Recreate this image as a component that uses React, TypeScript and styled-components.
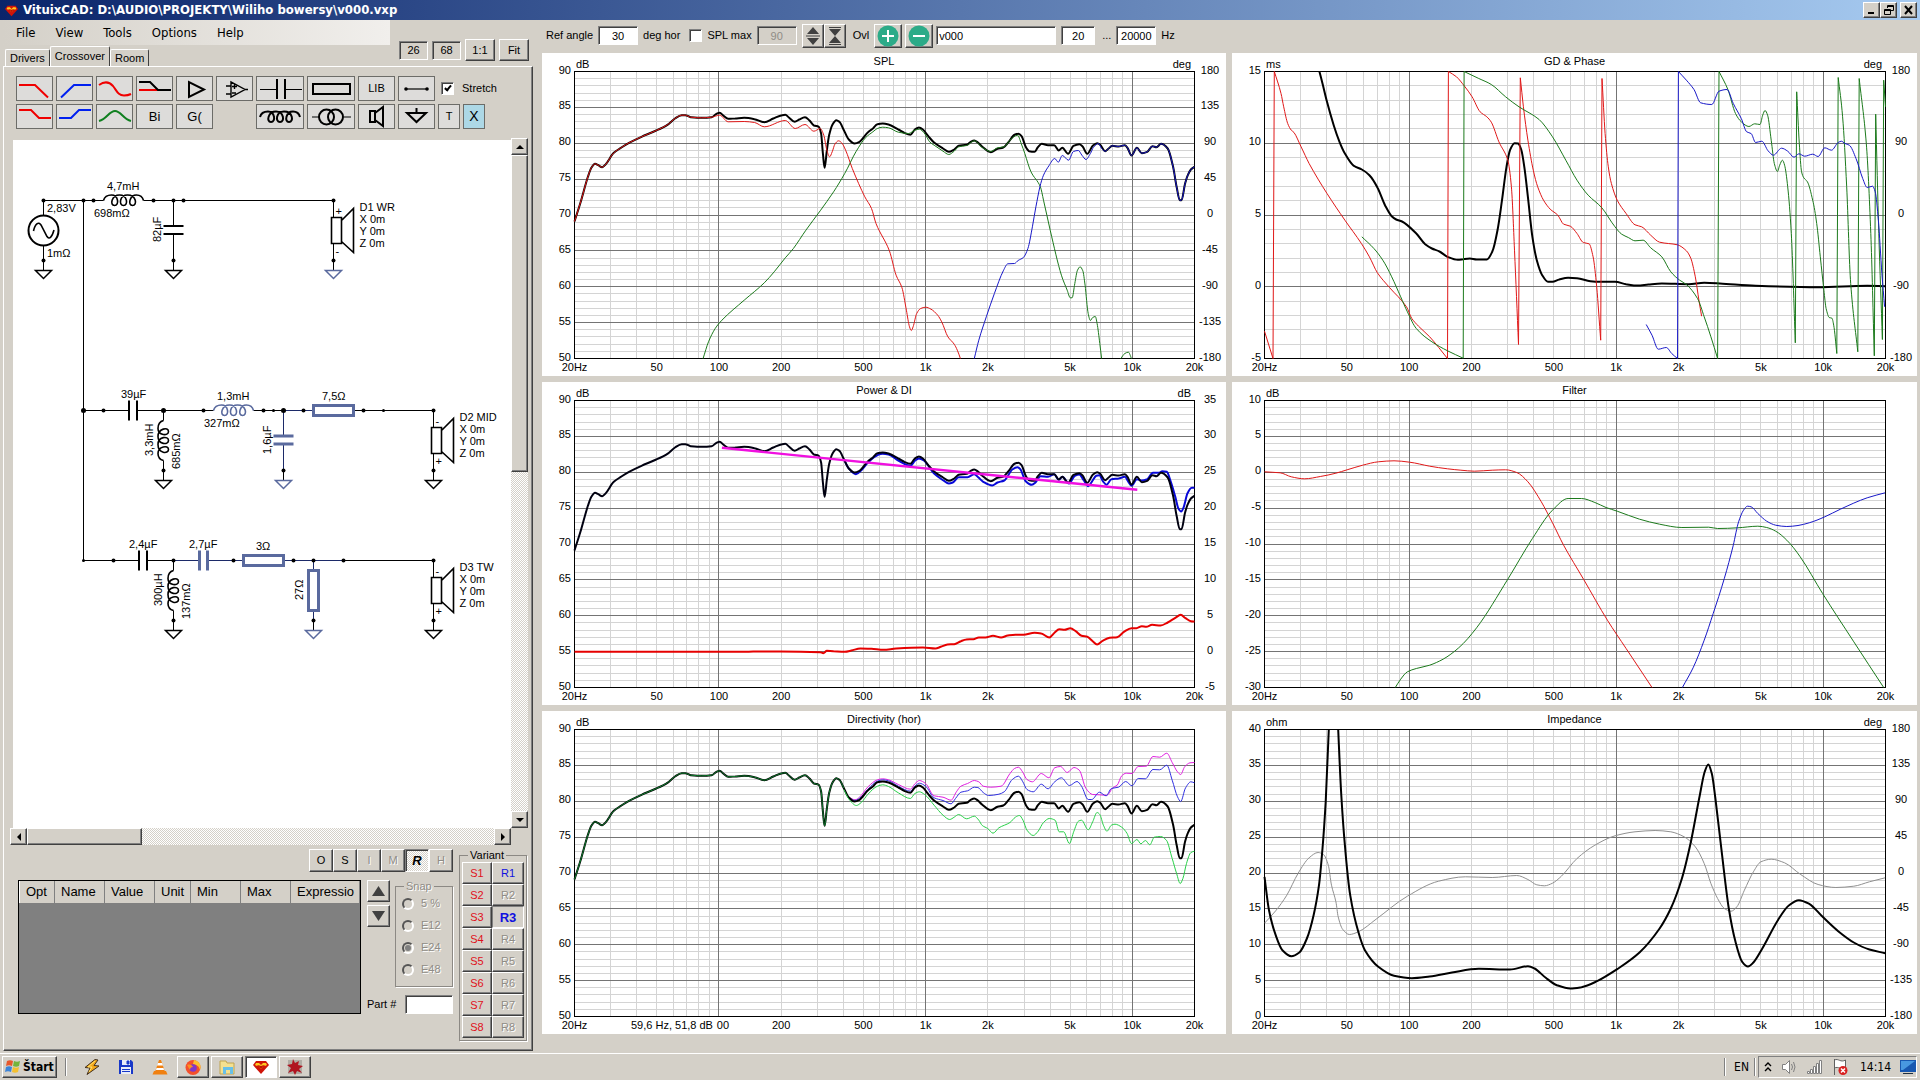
import React, { useLayoutEffect, useRef, useState } from 'react';
import styled, { createGlobalStyle, css } from 'styled-components';

const face = '#d4d0c8';
const uiFont = '"Liberation Sans", Arial, sans-serif';
const menuFont = '"DejaVu Sans Condensed", "DejaVu Sans", Tahoma, sans-serif';
const partBlue = '#5a6a9e';

const GlobalStyle = createGlobalStyle`
  *, *::before, *::after { box-sizing: border-box; }
  body { margin: 0; background: ${face}; font: 11px/13px ${uiFont}; color: #000; }
  button, input { font: inherit; color: inherit; margin: 0; border-radius: 0; }
`;

const raised = css`
  border: 1px solid;
  border-color: #fff #404040 #404040 #fff;
  box-shadow: inset -1px -1px 0 #808080;
`;
const sunken = css`
  border: 1px solid;
  border-color: #808080 #fff #fff #808080;
  box-shadow: inset 1px 1px 0 #404040;
`;
const dither = css`
  background: repeating-conic-gradient(#ffffff 0 25%, ${face} 0 50%) 0 0 / 2px 2px;
`;

/* ---------- window frame ---------- */

const Desktop = styled.div`
  display: flex;
  flex-direction: column;
  min-width: 1280px;
  min-height: 100vh;
`;
const TitleBar = styled.header`
  display: flex;
  align-items: center;
  height: 20px;
  padding: 0 3px 0 5px;
  gap: 5px;
  background: linear-gradient(90deg, #0a246a, #a6caf0);
  color: #fff;
`;
const Title = styled.h1`
  flex: 1;
  margin: 0;
  font: bold 13px/20px ${menuFont};
`;
const WindowButtons = styled.div`
  display: flex;
`;
const WindowButton = styled.button<{ $apart?: boolean }>`
  ${raised}
  width: 17px;
  height: 16px;
  padding: 0;
  margin-left: ${(p) => (p.$apart ? '3px' : '0')};
  background: ${face};
  display: grid;
  place-items: center;
`;
const Main = styled.main`
  flex: 1;
  display: flex;
`;

/* ---------- left pane ---------- */

const LeftPane = styled.section`
  width: 536px;
  flex: none;
  display: flex;
  flex-direction: column;
  padding: 0 3px 2px;
`;
const PaneHead = styled.div`
  display: flex;
  justify-content: space-between;
  height: 46px;
`;
const MenuAndTabs = styled.div`
  display: flex;
  flex-direction: column;
  justify-content: space-between;
`;
const MenuBar = styled.nav`
  display: flex;
  align-items: center;
  width: 387px;
  height: 25px;
  padding-left: 13px;
  gap: 20px;
  background: linear-gradient(90deg, ${face}, #f1efec);
`;
const MenuItem = styled.button`
  border: 0;
  padding: 0;
  background: none;
  font: 13px/16px ${menuFont};
`;
const Tabs = styled.div`
  display: flex;
  align-items: flex-end;
  padding-left: 2px;
`;
const Tab = styled.button<{ $active?: boolean }>`
  height: ${(p) => (p.$active ? 20 : 17)}px;
  padding: 0 4px;
  border: 1px solid;
  border-color: #fff #404040 transparent #fff;
  border-bottom: 0;
  border-radius: 2px 2px 0 0;
  background: ${face};
`;
const ViewTools = styled.div`
  display: flex;
  align-items: center;
  gap: 4px;
  height: 22px;
  margin: 19px 4px 0 0;
`;
const SizeBox = styled.output`
  ${sunken}
  width: 29px;
  height: 19px;
  line-height: 17px;
  text-align: center;
`;
const SmallButton = styled.button`
  ${raised}
  width: 30px;
  height: 22px;
  padding: 0;
  background: ${face};
`;
const TabPage = styled.div`
  flex: 1;
  display: flex;
  flex-direction: column;
  border: 1px solid;
  border-color: #fff #404040 #404040 #fff;
  box-shadow: inset -1px -1px 0 #808080;
`;
const ToolRows = styled.div`
  display: flex;
  flex-direction: column;
  gap: 3px;
  padding: 9px 0 0 12px;
`;
const ToolRow = styled.div`
  display: flex;
  align-items: center;
  gap: 3px;
`;
const Tool = styled.button<{ $w?: number; $tint?: string; $text?: number }>`
  width: ${(p) => p.$w ?? 37}px;
  height: 25px;
  padding: 0;
  border: 1px solid #6c6c68;
  background: ${(p) => p.$tint ?? '#dddcda'};
  font-size: ${(p) => p.$text ?? 11}px;
  svg { display: block; fill: none; }
`;
const ToolSpace = styled.span`
  width: 37px;
`;
const CheckLabel = styled.label`
  display: flex;
  align-items: center;
  gap: 8px;
  margin-left: 3px;
`;
const Check = styled.input<{ $before?: number }>`
  appearance: none;
  ${sunken}
  width: 13px;
  height: 13px;
  && { margin-left: ${(p) => p.$before ?? 0}px; }
  background: #fff;
  &:checked::after {
    content: '';
    display: block;
    width: 4px;
    height: 7px;
    margin: 1px 0 0 4px;
    border: solid #000;
    border-width: 0 2px 2px 0;
    transform: rotate(40deg);
  }
`;
const Viewport = styled.div`
  flex: 1;
  display: grid;
  grid-template: 1fr 17px / 1fr 17px;
  margin: 9px 4px 0 6px;
`;
const Sheet = styled.div`
  margin: 2px 0 0 3px;
  background: #fff;
  overflow: hidden;
  svg { display: block; }
`;
const Scroll = styled.div<{ $across?: boolean }>`
  ${dither}
  display: flex;
  flex-direction: ${(p) => (p.$across ? 'row' : 'column')};
`;
const ScrollArrow = styled.button`
  ${raised}
  width: 17px;
  height: 17px;
  padding: 0;
  background: ${face};
  display: grid;
  place-items: center;
`;
const Thumb = styled.div<{ $share: string }>`
  ${raised}
  flex: 0 0 ${(p) => p.$share};
  background: ${face};
`;
const Track = styled.div`
  flex: 1;
`;
const Lower = styled.div`
  display: flex;
  height: 205px;
  padding: 4px 5px 0 14px;
  gap: 6px;
`;
const LowerLeft = styled.div`
  flex: 1;
  display: flex;
  flex-direction: column;
  gap: 8px;
`;
const ModeRow = styled.div`
  display: flex;
  justify-content: flex-end;
`;
const ModeButton = styled.button<{ $on?: boolean }>`
  ${raised}
  width: 24px;
  height: 23px;
  padding: 0;
  background: ${face};
  &:disabled { color: #8f8c86; text-shadow: 1px 1px 0 #fff; }
  ${(p) =>
    p.$on &&
    css`
      ${sunken}
      ${dither}
      font: italic bold 13px ${uiFont};
    `}
`;
const PartsRow = styled.div`
  display: flex;
  gap: 6px;
  height: 134px;
`;
const GridBox = styled.div`
  flex: 1;
  border: 1px solid #000;
  background: #808080;
  overflow: hidden;
`;
const PartsTable = styled.table`
  width: 100%;
  table-layout: fixed;
  border-collapse: collapse;
  th {
    height: 22px;
    padding: 0 0 0 6px;
    background: ${face};
    border-right: 1px solid #808080;
    border-left: 1px solid #fff;
    font: 13px/20px ${uiFont};
    text-align: left;
    white-space: nowrap;
    overflow: hidden;
  }
`;
const PartsSide = styled.div`
  width: 86px;
  display: flex;
  flex-direction: column;
  justify-content: space-between;
`;
const SideTop = styled.div`
  display: flex;
  justify-content: space-between;
`;
const ArrowColumn = styled.div`
  display: flex;
  flex-direction: column;
  gap: 3px;
`;
const ArrowButton = styled.button`
  ${raised}
  width: 23px;
  height: 22px;
  padding: 0;
  background: ${face};
  display: grid;
  place-items: center;
`;
const Group = styled.fieldset<{ $w: number; $dim?: boolean }>`
  width: ${(p) => p.$w}px;
  min-width: 0;
  margin: 0;
  padding: 0 2px 2px;
  border: 1px solid #8c8984;
  box-shadow: 1px 1px 0 #fff;
  ${(p) => p.$dim && 'color: #8f8c86; text-shadow: 1px 1px 0 #fff;'}
  legend { margin-left: 6px; padding: 0 2px; line-height: 13px; }
`;
const RadioList = styled.div`
  display: flex;
  flex-direction: column;
  gap: 9px;
  padding: 4px 4px 8px;
`;
const RadioLabel = styled.label`
  display: flex;
  align-items: center;
  gap: 7px;
`;
const Radio = styled.input`
  appearance: none;
  width: 12px;
  height: 12px;
  border: 2px solid;
  border-color: #555 #fff #fff #555;
  border-radius: 50%;
  &:checked {
    background: #808080;
    background-clip: content-box;
    padding: 1px;
  }
`;
const PartLabel = styled.label`
  display: flex;
  align-items: center;
  justify-content: space-between;
`;
const Field = styled.input<{ $w: number; $left?: boolean }>`
  ${sunken}
  width: ${(p) => p.$w}px;
  height: 19px;
  padding: 0 2px;
  background: #fff;
  text-align: ${(p) => (p.$left ? 'left' : 'center')};
  &:disabled { background: ${face}; color: #8f8c86; }
`;
const VariantGrid = styled.div`
  display: grid;
  grid-template-columns: 30px 32px;
  grid-auto-rows: 22px;
`;
const VariantButton = styled.button<{ $color: string; $on?: boolean }>`
  ${raised}
  padding: 0;
  background: ${face};
  color: ${(p) => p.$color};
  &:disabled { color: #8f8c86; text-shadow: 1px 1px 0 #fff; }
  ${(p) => p.$on && css`border-color: #808080 #fff #fff #808080; box-shadow: none; font-weight: bold; font-size: 13px;`}
`;

/* ---------- right pane ---------- */

const RightPane = styled.section`
  flex: 1;
  min-width: 0;
  display: flex;
  flex-direction: column;
  padding: 0 3px 19px 6px;
`;
const RefBar = styled.div`
  display: flex;
  align-items: center;
  height: 33px;
  padding: 0 0 2px 4px;
  gap: 5px;
`;
const RefLabel = styled.label<{ $before?: number }>`
  margin-left: ${(p) => p.$before ?? 0}px;
  white-space: nowrap;
`;
const SpinPair = styled.div`
  display: flex;
`;
const Spin = styled.button`
  ${raised}
  width: 22px;
  height: 24px;
  padding: 0;
  background: ${face};
  display: grid;
  place-items: center;
`;
const Overlay = styled.div`
  display: flex;
  align-items: center;
  gap: 3px;
`;
const RoundButton = styled.button`
  ${raised}
  width: 28px;
  height: 24px;
  padding: 0;
  background: ${face};
  display: grid;
  place-items: center;
`;
const Charts = styled.div`
  flex: 1;
  display: grid;
  grid-template-columns: 684fr 685fr;
  grid-template-rows: repeat(3, 1fr);
  gap: 6px;
`;
const ChartBox = styled.figure`
  margin: 0;
  min-width: 0;
  min-height: 220px;
  background: #fff;
  overflow: hidden;
  svg { display: block; }
  text { font: 11px ${uiFont}; }
`;

/* ---------- task bar ---------- */

const TaskBar = styled.footer`
  display: flex;
  align-items: center;
  height: 27px;
  padding: 0 3px 0 2px;
  border-top: 1px solid #fff;
  font: 12px/16px ${menuFont};
`;
const StartButton = styled.button`
  ${raised}
  display: flex;
  align-items: center;
  gap: 2px;
  width: 55px;
  height: 22px;
  padding: 0 2px;
  background: ${face};
  font: bold 12px/16px ${menuFont};
`;
const Divider = styled.span<{ $tight?: boolean }>`
  width: 2px;
  height: 18px;
  margin: ${(p) => (p.$tight ? '0 2px 0 5px' : '0 8px')};
  border-left: 1px solid #808080;
  border-right: 1px solid #fff;
`;
const Launchers = styled.div`
  display: flex;
  gap: 18px;
  padding: 0 9px;
`;
const Launcher = styled.button`
  width: 16px;
  height: 16px;
  padding: 0;
  border: 0;
  background: none;
  svg { display: block; }
`;
const Tasks = styled.div`
  display: flex;
  flex: 1;
  gap: 2px;
`;
const Task = styled.button<{ $on?: boolean }>`
  ${raised}
  width: 32px;
  height: 22px;
  padding: 0;
  display: grid;
  place-items: center;
  background: ${face};
  ${(p) => p.$on && css`${sunken} background: #fff;`}
`;
const Tray = styled.div`
  display: flex;
  align-items: center;
  justify-content: space-between;
  width: 159px;
  height: 22px;
  padding: 0 0 0 5px;
  border: 1px solid;
  border-color: #808080 #fff #fff #808080;
`;

/* ---------- schematic ---------- */

const coilPath =
  'M0 0C1-4 4-5.5 8-5.5C15-5.5 16 5 11 5C6 5 8-5.5 16-5.5C24-5.5 25 5 20 5C15 5 16-5.5 24-5.5C33-5.5 34 5 29 5C24 5 26-5.5 33-5.5C37-5.5 39-4 40 0';

const Coil = ({ x, y, down, color = '#000' }: { x: number; y: number; down?: boolean; color?: string }) => (
  <path d={coilPath} transform={`translate(${x} ${y})${down ? ' rotate(90) scale(1 -1)' : ''}`} stroke={color} strokeWidth="1.6" fill="none" />
);
const Dot = ({ x, y, r = 2 }: { x: number; y: number; r?: number }) => <circle cx={x} cy={y} r={r} fill="#000" />;
const Ground = ({ x, y, color = '#000' }: { x: number; y: number; color?: string }) => (
  <g>
    <path d={`M${x} ${y}v10`} stroke="#000" />
    <Dot x={x} y={y} />
    <path d={`M${x - 8} ${y + 10}h16l-8 8z`} fill="#fff" stroke={color} strokeWidth="1.5" />
  </g>
);
const CapH = ({ x, y, color = '#000', w = 2 }: { x: number; y: number; color?: string; w?: number }) => (
  <g>
    <rect x={x - 3} y={y - 3} width="6" height="6" fill="#fff" />
    <path d={`M${x - 4} ${y - 10}v20M${x + 4} ${y - 10}v20`} stroke={color} strokeWidth={w} />
  </g>
);
const CapV = ({ x, y, color = '#000', w = 2 }: { x: number; y: number; color?: string; w?: number }) => (
  <g>
    <rect x={x - 3} y={y - 3} width="6" height="6" fill="#fff" />
    <path d={`M${x - 10} ${y - 4}h20M${x - 10} ${y + 4}h20`} stroke={color} strokeWidth={w} />
  </g>
);
const Up = ({ x, y, children }: { x: number; y: number; children: string }) => (
  <text transform={`translate(${x} ${y}) rotate(-90)`}>{children}</text>
);
const Driver = ({ x, y, name, flip, color }: { x: number; y: number; name: string; flip?: boolean; color?: string }) => (
  <g>
    <path d={`M${x} ${y}v60`} stroke="#000" />
    <Dot x={x} y={y} />
    <Ground x={x} y={y + 60} color={color} />
    <path d={`M${x - 2} ${y + 17}h10v26h-10zM${x + 8} ${y + 20}l12 -12v44l-12 -11`} fill="#fff" stroke="#000" strokeWidth="1.6" />
    <text x={x + 2} y={y + 14}>{flip ? '-' : '+'}</text>
    <text x={x + 2} y={y + 54}>{flip ? '+' : '-'}</text>
    {[name, 'X 0m', 'Y 0m', 'Z 0m'].map((t, i) => (
      <text key={t} x={x + 26} y={y + 10 + i * 12}>{t}</text>
    ))}
  </g>
);

const Schematic = () => (
  <svg width="498" height="688" viewBox="13 140 498 688" fontFamily='"Liberation Sans", Arial, sans-serif' fontSize="11">
    <g stroke="#000" fill="none">
      <path d="M43.5 260.5V200.5H103.5M143.5 200.5H333.5M83.5 200.5V560.5H173.5M173.5 200.5V260.5" />
      <path d="M83.5 410.5H213.5M253.5 410.5H433.5M163.5 410.5v10M163.5 460.5v10" />
      <path d="M343.5 560.5H433.5M173.5 560.5v10M173.5 610.5v10" />
      <path d="M173.5 560.5H343.5M313.5 560.5V620.5M283.5 410.5V470.5M283.5 410.5H313.5" stroke="#1c2a68" />
    </g>
    <circle cx="43.5" cy="230.5" r="15" fill="#fff" stroke="#000" strokeWidth="2" />
    <path d="M33.5 231C35 224 38.5 221 41 225L47 236.5C49.5 240 52 237 54 230" fill="none" stroke="#000" strokeWidth="1.6" />
    <Ground x={43.5} y={260.5} />
    <Coil x={103.5} y={200.5} />
    <CapV x={173.5} y={230} />
    <Ground x={173.5} y={260.5} />
    <CapH x={133} y={410.5} />
    <Coil x={163.5} y={420.5} down />
    <Ground x={163.5} y={470.5} />
    <Coil x={213.5} y={410.5} color={partBlue} />
    <CapV x={283.5} y={440} color={partBlue} w={3} />
    <Ground x={283.5} y={470.5} color={partBlue} />
    <rect x="313.5" y="405.5" width="40" height="10" fill="#fff" stroke={partBlue} strokeWidth="3" />
    <CapH x={143} y={560.5} />
    <CapH x={203.5} y={560.5} color={partBlue} w={3} />
    <Coil x={173.5} y={570.5} down />
    <Ground x={173.5} y={620.5} />
    <rect x="243.5" y="555.5" width="40" height="10" fill="#fff" stroke={partBlue} strokeWidth="3" />
    <rect x="308.5" y="570.5" width="10" height="40" fill="#fff" stroke={partBlue} strokeWidth="3" />
    <Ground x={313.5} y={620.5} color={partBlue} />
    {[43.5, 83.5, 93.5, 153.5, 173.5, 183.5].map((x) => <Dot key={x} x={x} y={200.5} />)}
    {[103.5, 203.5, 263.5, 303.5, 363.5].map((x) => <Dot key={x} x={x} y={410.5} />)}
    {[83.5, 163.5, 283.5].map((x) => <Dot key={x} x={x} y={410.5} r={2.5} />)}
    {[273.5, 383.5].map((x) => <Dot key={x} x={x} y={410.5} r={1.5} />)}
    {[113.5, 173.5, 233.5, 293.5, 313.5, 343.5].map((x) => <Dot key={x} x={x} y={560.5} />)}
    <Dot x={83.5} y={560.5} r={1.5} />
    <Driver x={333.5} y={200.5} name="D1 WR" color={partBlue} />
    <Driver x={433.5} y={410.5} name="D2 MID" flip />
    <Driver x={433.5} y={560.5} name="D3 TW" flip />
    <text x="47" y="212">2,83V</text>
    <text x="47" y="257">1mΩ</text>
    <text x="107" y="190">4,7mH</text>
    <text x="94" y="217">698mΩ</text>
    <Up x={161} y={242}>82µF</Up>
    <text x="121" y="398">39µF</text>
    <Up x={153} y={456}>3,3mH</Up>
    <Up x={180} y={469}>685mΩ</Up>
    <text x="217" y="400">1,3mH</text>
    <text x="204" y="427">327mΩ</text>
    <Up x={271} y={454}>1,6µF</Up>
    <text x="322" y="400">7,5Ω</text>
    <text x="129" y="548">2,4µF</text>
    <text x="189" y="548">2,7µF</text>
    <text x="256" y="550">3Ω</text>
    <Up x={162} y={606}>300µH</Up>
    <Up x={190} y={619}>137mΩ</Up>
    <Up x={303} y={600}>27Ω</Up>
  </svg>
);

/* ---------- charts ---------- */

/* Traces are sampled on a grid 861 units high; `top` is the sample value of the upper frame edge. */
type Trace = { pts: string; top: number; color: string; w?: number };
type ChartSpec = {
  title: string;
  left: string[];
  right?: string[];
  unit: string;
  rightUnit?: string;
  minor: number;
  span: number;
  traces: Trace[];
  cursor?: string;
};

const head =
  '100,664 115,600 130,530 138,502 146,491 153,495 162,501 170,492 188,458 205,442 222,428 250,410 283,391 308,374 325,355 340,345 348,345 360,351 385,353 407,351 ';
const bass =
  '418,341 425,338 433,346 444,356 460,355 480,353 503,357 525,366 545,355 565,345 572,344 580,352 593,365 603,358 616,351 626,361 636,376 647,380 652,400 656,460 660,503 665,450 670,405 677,375 686,360 693,365 703,390 ';
const treble =
  '1288,453 1295,446 1304,437 1318,439 1332,435 1338,443 1347,466 1359,443 1370,459 1382,455 1394,438 1403,441 1413,431 1428,445 1440,500 1448,560 1455,600 1459,600 1467,550 1473,525 1480,508 1488,500';
const total =
  head + bass +
  '714,418 727,430 738,425 757,396 768,385 778,372 790,370 803,373 825,388 838,398 852,404 862,388 871,382 880,388 892,408 905,427 925,445 938,455 950,448 960,437 978,434 986,426 995,421 1003,427 1013,440 1032,456 1047,446 1060,442 1072,425 1085,404 1094,401 1101,408 1110,440 1118,453 1130,455 1137,442 1146,431 1160,435 1174,435 1184,451 1192,443 1205,461 1217,437 1230,432 1237,438 1248,461 1260,437 1270,429 1277,434 ' +
  treble;

const hearing = ['90', '85', '80', '75', '70', '65', '60', '55', '50'];
const degrees = ['180', '135', '90', '45', '0', '-45', '-90', '-135', '-180'];
const red = '#e01818';
const green = '#1c7a1c';
const blue = '#1818c8';

const charts: ChartSpec[] = [
  {
    title: 'SPL', left: hearing, right: degrees, unit: 'dB', rightUnit: 'deg', minor: 40, span: 1388,
    traces: [
      { pts: total, top: 214, color: '#000', w: 2 },
      { top: 214, color: red, pts: head + '425,345 444,365 480,364 503,367 525,380 572,361 594,385 616,373 636,393 650,385 658,405 665,450 671,470 677,455 683,432 691,422 698,428 707,450 722,505 750,590 765,625 775,670 805,752 820,825 833,862 843,930 850,980 854,991 858,980 866,940 875,925 886,921 898,927 913,945 922,965 936,1010 950,1032 957,1050 964,1075' },
      { top: 214, color: green, pts: '388,1075 400,1025 415,985 430,960 480,900 525,848 547,815 572,773 590,745 618,690 650,632 680,575 705,520 730,455 752,412 768,395 778,385 790,381 803,383 825,396 848,400 862,390 872,387 885,402 895,425 905,435 925,453 938,463 950,453 960,440 978,436 995,422 1013,442 1032,454 1047,443 1062,440 1075,420 1092,405 1100,430 1108,460 1122,515 1143,560 1150,600 1165,690 1190,825 1203,870 1210,893 1214,893 1220,850 1226,810 1232,800 1238,812 1243,855 1250,940 1255,961 1260,952 1266,949 1270,970 1276,1030 1280,1075' },
      { top: 214, color: green, pts: '1323,1075 1332,1060 1340,1056 1347,1075' },
      { top: 214, color: blue, pts: '995,1075 1005,1020 1022,950 1040,880 1060,812 1070,791 1085,790 1093,781 1105,772 1115,745 1125,680 1133,620 1142,560 1150,525 1162,497 1175,475 1183,486 1192,466 1206,480 1217,454 1228,451 1236,465 1245,478 1255,460 1262,441 1273,430 1280,445 ' + treble },
    ],
  },
  {
    title: 'GD & Phase', left: ['15', '10', '5', '0', '-5'], right: ['180', '90', '0', '-90', '-180'], unit: 'ms', rightUnit: 'deg', minor: 20, span: 1391,
    traces: [
      { top: 214, color: '#000', w: 2, pts: '223,214 230,250 240,305 255,375 268,425 280,460 300,497 318,508 335,525 353,562 370,615 385,648 395,658 408,664 440,700 460,732 475,745 492,754 510,770 533,779 545,777 560,775 575,778 598,778 610,755 622,690 632,600 642,500 650,450 660,429 668,430 675,448 682,500 690,590 700,710 710,780 722,825 735,845 745,845 760,838 780,833 800,834 830,843 850,845 885,845 910,852 935,856 960,853 990,850 1050,852 1085,848 1120,850 1200,857 1340,861 1450,857 1491,858' },
      { top: 214, color: red, pts: '100,993 119,1075 122,214 137,280 143,320 152,370 160,390 166,397 182,440 200,490 240,580 280,660 317,730 335,770 353,818 380,862 418,920 430,955 445,978 470,1010 510,1075 512,214 530,230 548,258 565,290 583,335 598,350 608,366 625,425 645,480 653,560 660,750 669,1033 673,233 680,320 690,420 702,510 712,560 725,600 740,627 757,645 770,672 785,678 800,700 814,727 827,731 836,770 844,860 853,1020 856,235 863,400 870,500 877,550 890,600 910,640 930,674 945,680 965,705 985,726 1025,734 1045,752 1055,775 1065,830 1073,900 1079,948' },
      { top: 214, color: green, pts: '318,710 345,745 365,780 385,830 405,890 420,935 440,985 475,1025 510,1052 545,1074 547,214 580,235 608,253 640,290 670,320 715,358 745,410 775,480 800,540 825,585 855,622 885,680 900,702 915,712 930,722 948,720 965,743 990,770 1010,815 1030,840 1045,853 1070,895 1085,950 1100,1010 1115,1075 1118,214 1138,268 1155,340 1168,365 1185,379 1198,371 1210,373 1216,345 1221,331 1227,345 1235,420 1242,490 1249,514 1254,495 1260,480 1265,495 1272,560 1280,700 1289,1028 1292,275 1298,430 1303,515 1308,533 1316,545 1328,600 1337,670 1345,770 1353,870 1358,925 1365,952 1371,954 1375,975 1382,1060 1385,232 1395,350 1404,560 1413,850 1429,1055 1432,235 1448,430 1458,700 1466,1067 1469,342 1476,700 1484,1018 1487,240 1491,320' },
      { top: 214, color: blue, pts: '955,973 968,1005 982,1047 1000,1042 1012,1060 1025,1075 1027,214 1045,240 1062,268 1077,308 1102,313 1118,273 1136,268 1150,310 1168,355 1180,395 1190,400 1200,427 1214,423 1228,452 1240,465 1258,444 1272,453 1286,471 1297,461 1310,468 1328,462 1340,469 1355,443 1370,450 1385,427 1392,423 1400,430 1410,435 1425,475 1440,535 1450,562 1462,558 1468,575 1475,660 1483,820 1489,920' },
    ],
  },
  {
    title: 'Power & DI', left: hearing, right: ['35', '30', '25', '20', '15', '10', '5', '0', '-5'], unit: 'dB', rightUnit: 'dB', minor: 40, span: 1388,
    traces: [
      { top: 76, color: '#0808d8', w: 2, pts: '703,252 714,280 730,297 742,285 757,262 778,240 790,236 803,238 825,256 852,272 862,257 871,250 882,256 905,295 925,315 938,325 947,322 960,306 980,306 995,297 1005,308 1015,320 1035,331 1047,322 1062,316 1080,283 1092,276 1098,282 1110,318 1124,329 1132,322 1143,303 1160,305 1174,297 1184,314 1192,305 1207,325 1220,302 1230,298 1240,315 1250,333 1258,320 1268,302 1275,300 1283,318 1291,329 1302,312 1318,310 1332,305 1340,320 1347,332 1359,312 1370,316 1382,312 1395,293 1408,293 1416,288 1426,290 1435,320 1445,365 1452,400 1458,409 1464,395 1472,355 1482,338 1488,338' },
      { pts: total, top: 214, color: '#000010', w: 2 },
      { top: 76, color: '#e60000', w: 2, pts: '100,830 480,830 500,829 560,829 650,831 657,834 665,827 680,828 705,830 720,826 740,820 765,821 792,824 820,820 880,817 908,820 920,815 935,808 950,807 965,798 977,793 993,792 1005,787 1020,787 1037,782 1055,787 1070,781 1087,779 1105,779 1130,773 1145,775 1163,787 1175,772 1185,762 1197,764 1210,759 1222,768 1235,782 1248,785 1260,798 1270,808 1282,797 1298,788 1315,786 1330,770 1347,759 1358,759 1370,753 1380,755 1393,749 1412,751 1428,742 1445,728 1457,719 1468,729 1480,738 1488,739' },
      { top: 76, color: '#f010e0', w: 2.4, pts: '430,218 1360,344' },
    ],
  },
  {
    title: 'Filter', left: ['10', '5', '0', '-5', '-10', '-15', '-20', '-25', '-30'], unit: 'dB', minor: 40, span: 1391,
    traces: [
      { top: 76, color: red, pts: '100,290 135,293 160,305 190,311 225,304 260,294 285,284 320,270 355,260 390,257 425,261 470,273 510,281 540,285 570,288 610,285 640,284 665,292 690,320 720,380 745,443 770,510 815,613 868,735 910,820 968,937' },
      { top: 76, color: green, pts: '393,937 405,912 420,890 440,880 470,870 500,852 535,818 575,758 645,612 700,490 745,405 780,370 810,370 840,382 865,397 890,408 940,432 985,447 1035,457 1095,456 1115,460 1160,458 1205,453 1225,457 1245,468 1270,495 1300,545 1350,655 1420,800 1487,937' },
      { top: 76, color: blue, pts: '1036,937 1060,878 1085,795 1105,715 1130,610 1150,510 1162,440 1173,405 1182,393 1190,395 1205,415 1225,438 1245,450 1270,454 1295,451 1320,443 1355,425 1390,402 1450,368 1490,353' },
    ],
  },
  {
    title: 'Directivity (hor)', left: hearing, unit: 'dB', minor: 40, span: 1388, cursor: '59,6 Hz, 51,8 dB',
    traces: [
      { top: 73, color: '#e020e0', pts: '717,278 728,284 738,276 757,245 778,224 790,221 803,224 825,238 852,252 862,236 872,226 886,235 905,272 925,276 943,285 955,260 965,243 980,235 995,226 1005,230 1015,243 1032,246 1055,243 1075,205 1085,190 1094,186 1103,200 1113,223 1125,230 1145,205 1162,218 1175,188 1188,184 1203,202 1218,187 1230,195 1245,250 1260,268 1275,269 1292,270 1305,248 1315,240 1325,212 1335,204 1348,205 1362,184 1380,183 1395,154 1410,156 1426,144 1438,172 1450,200 1457,208 1466,185 1478,173 1488,172' },
      { top: 73, color: '#3030e0', pts: '717,280 728,286 742,275 757,252 778,228 790,224 803,227 825,243 852,258 862,243 872,234 886,243 905,278 925,286 943,296 953,280 965,261 980,257 995,246 1003,247 1015,262 1027,271 1050,267 1062,260 1080,223 1094,213 1103,228 1113,253 1127,260 1145,237 1160,251 1175,230 1190,218 1208,241 1225,229 1235,243 1250,283 1258,283 1275,261 1290,272 1302,250 1318,246 1334,229 1348,242 1362,220 1378,221 1395,193 1410,194 1426,180 1438,225 1450,275 1457,289 1468,248 1480,230 1488,233' },
      { pts: total, top: 214, color: '#000', w: 2 },
      { pts: head + bass, top: 214, color: '#108030' },
      { top: 73, color: '#28d048', pts: '703,253 715,283 731,301 742,292 757,267 778,243 790,239 803,244 825,263 852,280 862,265 872,260 884,268 905,300 925,330 940,343 950,336 960,328 978,341 995,333 1005,345 1013,361 1025,370 1037,384 1050,368 1075,352 1087,336 1096,331 1104,345 1113,375 1127,391 1138,378 1150,352 1163,340 1176,345 1185,380 1195,380 1208,415 1218,378 1228,348 1235,345 1250,374 1260,350 1270,322 1276,328 1284,360 1292,378 1302,360 1310,357 1325,366 1337,385 1347,415 1359,403 1368,416 1378,406 1388,419 1398,396 1412,394 1425,405 1438,460 1448,505 1456,535 1462,520 1470,475 1480,442 1488,438' },
    ],
  },
  {
    title: 'Impedance', left: ['40', '35', '30', '25', '20', '15', '10', '5', '0'], right: degrees, unit: 'ohm', rightUnit: 'deg', minor: 40, span: 1391,
    traces: [
      { top: 73, color: '#909090', pts: '100,654 125,617 150,570 175,505 200,458 220,442 232,448 243,480 250,540 260,590 265,635 275,672 290,688 310,680 350,642 420,573 490,528 550,515 610,517 665,511 690,523 710,539 727,542 745,534 765,513 800,460 840,420 885,392 930,380 975,376 1010,380 1040,395 1065,425 1085,475 1100,535 1115,580 1130,610 1145,618 1158,605 1175,555 1195,500 1212,470 1235,462 1265,473 1300,507 1340,538 1380,547 1420,543 1455,530 1490,518' },
      { top: 73, color: '#000', w: 2, pts: '100,515 110,615 125,690 140,735 160,753 178,742 195,700 210,630 222,540 230,430 237,290 244,73' },
      { top: 73, color: '#000', w: 2, pts: '265,73 272,270 280,420 292,570 310,680 325,735 355,785 390,812 430,819 470,814 520,802 580,791 650,793 690,783 705,790 730,818 755,840 785,850 810,846 845,828 890,792 940,742 985,670 1010,610 1035,520 1055,410 1075,270 1086,200 1094,178 1102,205 1110,280 1125,450 1140,610 1155,710 1170,770 1183,784 1195,772 1215,730 1250,645 1275,600 1297,585 1320,596 1350,635 1385,678 1420,712 1455,733 1490,744' },
    ],
  },
];

const freqLabels: [number, string][] = [
  [20, '20Hz'], [50, '50'], [100, '100'], [200, '200'], [500, '500'], [1000, '1k'], [2000, '2k'], [5000, '5k'], [10000, '10k'], [20000, '20k'],
];
const freqLines = [30, 40, 50, 60, 70, 80, 90, 200, 300, 400, 500, 600, 700, 800, 900, 2000, 3000, 4000, 5000, 6000, 7000, 8000, 9000];

/* Monotone cubic through the samples, so that peaks never overshoot. */
function smooth(p: number[][]) {
  const n = p.length;
  const d = p.slice(1).map((q, i) => (q[1] - p[i][1]) / (q[0] - p[i][0]));
  const m = p.map((_, i) => {
    if (i === 0) return d[0];
    if (i === n - 1) return d[n - 2];
    if (d[i - 1] * d[i] <= 0) return 0;
    return (2 * d[i - 1] * d[i]) / (d[i - 1] + d[i]);
  });
  let s = `${p[0][0].toFixed(1)} ${p[0][1].toFixed(1)}`;
  for (let i = 0; i < n - 1; i++) {
    const h = (p[i + 1][0] - p[i][0]) / 3;
    s += `C${[p[i][0] + h, p[i][1] + m[i] * h, p[i + 1][0] - h, p[i + 1][1] - m[i + 1] * h, p[i + 1][0], p[i + 1][1]].map((v) => v.toFixed(1)).join(' ')}`;
  }
  return s;
}

/* A phase trace jumps from -180 to 180 degrees: each piece between two jumps is smoothed by itself. */
function splitAtWraps(samples: number[][]) {
  const pieces: number[][][] = [[]];
  samples.forEach((q, i) => {
    const prev = samples[i - 1];
    if (prev && q[0] - prev[0] <= 4 && prev[1] - q[1] > 350) pieces.push([]);
    pieces[pieces.length - 1].push(q);
  });
  return pieces;
}

function Chart({ spec }: { spec: ChartSpec }) {
  const box = useRef<HTMLElement>(null);
  const [size, setSize] = useState({ w: 684, h: 323 });
  useLayoutEffect(() => {
    const el = box.current;
    if (!el) return;
    const measure = () => setSize({ w: Math.floor(el.clientWidth), h: Math.floor(el.clientHeight) });
    measure();
    const ro = new ResizeObserver(measure);
    ro.observe(el);
    return () => ro.disconnect();
  }, []);
  const x0 = 32.5;
  const y0 = 18.5;
  const pw = size.w - 64;
  const ph = size.h - 36;
  const fx = (f: number) => x0 + (Math.log10(f / 20) / 3) * pw;
  const snap = (v: number) => Math.round(v - 0.5) + 0.5;
  const rows = spec.left.length - 1;
  const path = (t: Trace) => {
    const samples = t.pts.trim().split(' ').map((s) => s.split(',').map(Number));
    const pieces = splitAtWraps(samples).map((piece) =>
      smooth(piece.map(([a, b]) => [x0 + ((a - 100) / spec.span) * pw, y0 + ((b - t.top) / 861) * ph])),
    );
    return 'M' + pieces.join('L');
  };
  return (
    <ChartBox ref={box}>
      <svg width={size.w} height={size.h} role="img" aria-label={spec.title}>
        <g stroke="#d4d4d4" shapeRendering="crispEdges">
          {Array.from({ length: spec.minor - 1 }, (_, i) => {
            const y = snap(y0 + ((i + 1) / spec.minor) * ph);
            return <path key={i} d={`M${x0} ${y}h${pw}`} />;
          })}
          {freqLines.map((f) => <path key={f} d={`M${snap(fx(f))} ${y0}v${ph}`} />)}
        </g>
        <g stroke="#747474" shapeRendering="crispEdges">
          {spec.left.slice(1, -1).map((l, i) => <path key={l} d={`M${x0} ${snap(y0 + ((i + 1) / rows) * ph)}h${pw}`} />)}
          {[100, 1000, 10000].map((f) => <path key={f} d={`M${snap(fx(f))} ${y0}v${ph}`} />)}
        </g>
        <rect x={x0} y={y0} width={pw} height={ph} fill="none" stroke="#000" shapeRendering="crispEdges" />
        {spec.traces.map((t, i) => (
          <path key={i} d={path(t)} fill="none" stroke={t.color} strokeWidth={t.w ?? 1} strokeLinejoin="round" />
        ))}
        <text x={size.w / 2} y="12" textAnchor="middle">{spec.title}</text>
        <text x="34" y="15">{spec.unit}</text>
        {spec.rightUnit && <text x={size.w - 35} y="15" textAnchor="end">{spec.rightUnit}</text>}
        {spec.left.map((l, i) => (
          <text key={l} x="29" y={y0 + (i / rows) * ph + 2} textAnchor="end">{l}</text>
        ))}
        {spec.right?.map((l, i) => (
          <text key={l} x={size.w - 16} y={y0 + (i / rows) * ph + 2} textAnchor="middle">{l}</text>
        ))}
        {freqLabels.map(([f, l]) => {
          /* the cursor read-out covers the 50 Hz label and the first digit of the 100 Hz one */
          if (spec.cursor && f === 50) return null;
          const cut = spec.cursor && f === 100;
          return (
            <text key={f} x={fx(f) + (cut ? 4 : 0)} y={size.h - 5} textAnchor="middle">{cut ? '00' : l}</text>
          );
        })}
        {spec.cursor && <text x="89" y={size.h - 5}>{spec.cursor}</text>}
      </svg>
    </ChartBox>
  );
}

/* ---------- icons ---------- */

const ToolIcon = ({ w = 37, children }: { w?: number; children: React.ReactNode }) => (
  <svg width={w - 2} height="23" viewBox={`1 1 ${w - 2} 23`} strokeWidth="2">{children}</svg>
);
const Tri = ({ d }: { d: string }) => (
  <svg width="8" height="8" viewBox="0 0 8 8"><path d={d} /></svg>
);
const RubyIcon = ({ s = 14 }: { s?: number }) => (
  <svg width={s} height={s} viewBox="0 0 16 16">
    <path d="M3 2h10l3 4-8 9-8-9z" fill="#d01408" />
    <path d="M3 4h3l2 2 2-2h3l1 2-2 1-1-1-3 4-3-4-1 1-2-1z" fill="#ffc820" />
    <path d="M5 6l3 4 3-4-3 1z" fill="#c01000" />
  </svg>
);

const topTools: { label: string; w?: number; body: React.ReactNode }[] = [
  { label: 'Low pass', body: <path d="M3 9H19L32 21.500" stroke="#f00000" /> },
  { label: 'High pass', body: <path d="M5 21.500L18 9H35" stroke="#0020f0" /> },
  { label: 'Low shelf', body: <path d="M3 9C8 5.500 13 5.500 17 10C21 15 22 19.500 28 19.500C31 19.500 33 19 35 18" stroke="#f00000" /> },
  { label: 'Shelf', body: <><path d="M3 14H22" stroke="#f00000" /><path d="M3 6H14L22 14H35" stroke="#000" /></> },
  { label: 'Buffer', body: <path d="M13 6V21L28 13.500z" stroke="#000" /> },
  { label: 'Op amp', body: <path d="M15 6V21L29 13.500zM10 10h5M10 18h5M28 13.500h4M16 10.500h5M18.500 8v5M16 17h4" stroke="#000" strokeWidth="1.4" /> },
  { label: 'Capacitor', w: 48, body: <><path d="M4 13.500H21M29 13.500H46" stroke="#000" strokeWidth="1" /><path d="M21 3V23M29 3V23" stroke="#000" /></> },
  { label: 'Resistor', w: 48, body: <rect x="6" y="8" width="37" height="10" stroke="#000" /> },
];

export default function App() {
  return (
    <Desktop>
      <GlobalStyle />
      <TitleBar>
        <RubyIcon s={13} />
        <Title>VituixCAD: D:\AUDIO\PROJEKTY\Wiliho bowersy\v000.vxp</Title>
        <WindowButtons>
          <WindowButton aria-label="Minimize"><svg width="10" height="10"><path d="M1 8h6" stroke="#000" strokeWidth="2" /></svg></WindowButton>
          <WindowButton aria-label="Restore"><svg width="10" height="10" fill="none" stroke="#000"><path d="M3.500 3V.5h6v5H7M3 1.500h6M.5 4.500h6v5h-6zM.5 5.500h6" /></svg></WindowButton>
          <WindowButton aria-label="Close" $apart><svg width="10" height="10"><path d="M1 1l7 8M8 1L1 9" stroke="#000" strokeWidth="2" /></svg></WindowButton>
        </WindowButtons>
      </TitleBar>

      <Main>
        <LeftPane>
          <PaneHead>
            <MenuAndTabs>
              <MenuBar>
                {['File', 'View', 'Tools', 'Options', 'Help'].map((m) => <MenuItem key={m}>{m}</MenuItem>)}
              </MenuBar>
              <Tabs>
                <Tab>Drivers</Tab>
                <Tab $active>Crossover</Tab>
                <Tab>Room</Tab>
              </Tabs>
            </MenuAndTabs>
            <ViewTools>
              <SizeBox>26</SizeBox>
              <SizeBox>68</SizeBox>
              <SmallButton>1:1</SmallButton>
              <SmallButton>Fit</SmallButton>
            </ViewTools>
          </PaneHead>

          <TabPage>
            <ToolRows>
              <ToolRow>
                {topTools.map((t) => (
                  <Tool key={t.label} aria-label={t.label} $w={t.w}><ToolIcon w={t.w}>{t.body}</ToolIcon></Tool>
                ))}
                <Tool>LIB</Tool>
                <Tool aria-label="Wire"><ToolIcon><path d="M8 13H29" stroke="#000" strokeWidth="1.2" /><circle cx="8" cy="13" r="1.800" fill="#000" /><circle cx="29" cy="13" r="1.800" fill="#000" /></ToolIcon></Tool>
                <CheckLabel><Check type="checkbox" defaultChecked />Stretch</CheckLabel>
              </ToolRow>
              <ToolRow>
                <Tool aria-label="Low shelf, step"><ToolIcon><path d="M3 6H15L23 14H35" stroke="#f00000" /></ToolIcon></Tool>
                <Tool aria-label="High shelf, step"><ToolIcon><path d="M3 14H15L23 6H35" stroke="#0020f0" /></ToolIcon></Tool>
                <Tool aria-label="Peak"><ToolIcon><path d="M3 17C11 15 13 7 19 7S27 15 35 17" stroke="#108020" /></ToolIcon></Tool>
                <Tool $text={13}>Bi</Tool>
                <Tool $text={13}>G(</Tool>
                <ToolSpace />
                <Tool aria-label="Inductor" $w={48}><ToolIcon w={48}><path d={coilPath} transform="translate(4 13)" stroke="#000" /></ToolIcon></Tool>
                <Tool aria-label="Transformer" $w={48}><ToolIcon w={48}><path d="M5 13h7M37 13h7" stroke="#000" strokeWidth="1.2" /><circle cx="19.500" cy="13" r="7.500" stroke="#000" /><circle cx="28.500" cy="13" r="7.500" stroke="#000" /></ToolIcon></Tool>
                <Tool aria-label="Driver"><ToolIcon><path d="M12 7h5v11h-5zM17 9l8-6v19l-8-6" stroke="#000" /></ToolIcon></Tool>
                <Tool aria-label="Ground"><ToolIcon><path d="M18.500 4v5M9 9h19l-9.500 9z" stroke="#000" /></ToolIcon></Tool>
                <Tool $w={22}>T</Tool>
                <Tool $w={22} $tint="#add8e6" $text={14}>X</Tool>
              </ToolRow>
            </ToolRows>

            <Viewport>
              <Sheet><Schematic /></Sheet>
              <Scroll>
                <ScrollArrow aria-label="Scroll up"><Tri d="M4 2L8 6H0z" /></ScrollArrow>
                <Thumb $share="46%" />
                <Track />
                <ScrollArrow aria-label="Scroll down"><Tri d="M4 6L8 2H0z" /></ScrollArrow>
              </Scroll>
              <Scroll $across>
                <ScrollArrow aria-label="Scroll left"><Tri d="M2 4L6 0V8z" /></ScrollArrow>
                <Thumb $share="23%" />
                <Track />
                <ScrollArrow aria-label="Scroll right"><Tri d="M6 4L2 0V8z" /></ScrollArrow>
              </Scroll>
            </Viewport>

            <Lower>
              <LowerLeft>
                <ModeRow>
                  <ModeButton>O</ModeButton>
                  <ModeButton>S</ModeButton>
                  <ModeButton disabled>I</ModeButton>
                  <ModeButton disabled>M</ModeButton>
                  <ModeButton $on>R</ModeButton>
                  <ModeButton disabled>H</ModeButton>
                </ModeRow>
                <PartsRow>
                  <GridBox>
                    <PartsTable>
                      <colgroup>
                        {[35, 50, 50, 36, 50, 50].map((w, i) => <col key={i} width={w} />)}
                        <col />
                      </colgroup>
                      <thead>
                        <tr>{['Opt', 'Name', 'Value', 'Unit', 'Min', 'Max', 'Expressio'].map((h) => <th key={h} scope="col">{h}</th>)}</tr>
                      </thead>
                    </PartsTable>
                  </GridBox>
                  <PartsSide>
                    <SideTop>
                      <ArrowColumn>
                        <ArrowButton aria-label="Move up"><svg width="13" height="10"><path d="M6.500 0L13 10H0z" fill="#404040" /></svg></ArrowButton>
                        <ArrowButton aria-label="Move down"><svg width="13" height="10"><path d="M6.500 10L13 0H0z" fill="#404040" /></svg></ArrowButton>
                      </ArrowColumn>
                      <Group $w={58} $dim>
                        <legend>Snap</legend>
                        <RadioList>
                          {['5 %', 'E12', 'E24', 'E48'].map((r) => (
                            <RadioLabel key={r}><Radio type="radio" name="snap" disabled defaultChecked={r === 'E24'} />{r}</RadioLabel>
                          ))}
                        </RadioList>
                      </Group>
                    </SideTop>
                    <PartLabel>Part #<Field $w={48} /></PartLabel>
                  </PartsSide>
                </PartsRow>
              </LowerLeft>
              <div>
                <Group $w={68}>
                  <legend>Variant</legend>
                  <VariantGrid>
                    {[1, 2, 3, 4, 5, 6, 7, 8].map((n) => (
                      <React.Fragment key={n}>
                        <VariantButton $color="#e01020">{`S${n}`}</VariantButton>
                        <VariantButton $color="#1010e0" $on={n === 3} disabled={n !== 1 && n !== 3}>{`R${n}`}</VariantButton>
                      </React.Fragment>
                    ))}
                  </VariantGrid>
                </Group>
              </div>
            </Lower>
          </TabPage>
        </LeftPane>

        <RightPane>
          <RefBar>
            <RefLabel htmlFor="ref">Ref angle</RefLabel>
            <Field id="ref" $w={40} defaultValue="30" />
            <span>deg hor</span>
            <Check id="splmax" type="checkbox" $before={4} />
            <RefLabel htmlFor="splmax">SPL max</RefLabel>
            <Field $w={40} defaultValue="90" disabled aria-label="SPL maximum" />
            <SpinPair>
              <Spin aria-label="Expand"><svg width="14" height="18" fill="#404040"><path d="M7 0l6 7H1zM7 18l6-7H1zM0 8.500h14v1H0z" /></svg></Spin>
              <Spin aria-label="Compress"><svg width="14" height="18" fill="#404040"><path d="M7 9L1 2h12zM7 9l-6 7h12zM1 0h12v1H1zM1 17h12v1H1z" /></svg></Spin>
            </SpinPair>
            <RefLabel htmlFor="ovl" $before={2}>Ovl</RefLabel>
            <Overlay>
              <RoundButton aria-label="Add overlay"><svg width="22" height="22"><circle cx="11" cy="11" r="10.500" fill="#2cab88" /><path d="M5 11h12M11 5v12" stroke="#fff" strokeWidth="2" /></svg></RoundButton>
              <RoundButton aria-label="Remove overlay"><svg width="22" height="22"><circle cx="11" cy="11" r="10.500" fill="#2cab88" /><path d="M5 11h12" stroke="#fff" strokeWidth="2" /></svg></RoundButton>
              <Field id="ovl" $w={120} $left defaultValue="v000" />
            </Overlay>
            <Field $w={34} defaultValue="20" aria-label="Lowest frequency" />
            <RefLabel htmlFor="fmax" $before={2}>...</RefLabel>
            <Field id="fmax" $w={40} defaultValue="20000" />
            <span>Hz</span>
          </RefBar>
          <Charts>
            {charts.map((c) => <Chart key={c.title} spec={c} />)}
          </Charts>
        </RightPane>
      </Main>

      <TaskBar>
        <StartButton>
          <svg width="16" height="16" viewBox="0 0 16 16">
            <path d="M2 2c2-1 4-1 6 0L7 7C5 6 3 6 1 7z" fill="#e8582c" />
            <path d="M9 2c2 1 4 1 6 0l-1 5c-2 1-4 1-6 0z" fill="#74b43c" />
            <path d="M1 8c2-1 4-1 6 0l-1 5c-2-1-4-1-6 0z" fill="#3c84d8" />
            <path d="M8 8c2 1 4 1 6 0l-1 5c-2 1-4 1-6 0z" fill="#f4c030" />
          </svg>
          Štart
        </StartButton>
        <Divider />
        <Launchers>
          <Launcher aria-label="Winamp"><svg width="16" height="16"><path d="M11 .5L1 8.500l5 .5-3 6.500L15 7l-5-.5L14 1z" fill="#f4a818" stroke="#403020" /><path d="M11 2L4 8h4l-3 5" fill="none" stroke="#ffe070" /></svg></Launcher>
          <Launcher aria-label="Save"><svg width="16" height="16"><path d="M1 1h12l2 2v12H1z" fill="#1838c8" /><path d="M4 1h8v5H4zM3 8h10v7H3z" fill="#e8ecf8" /><path d="M9 2h2v3H9zM4 10.500h8M4 12.500h8" stroke="#1838c8" fill="#1838c8" /></svg></Launcher>
          <Launcher aria-label="VLC"><svg width="16" height="16"><path d="M7 1h2l4 12H3z" fill="#f08010" /><path d="M6 4h4l1 2.500H5zM4.500 9h7l.5 2H4z" fill="#fff" /><path d="M2 12h12l1.500 3.500H.5z" fill="#f08010" /></svg></Launcher>
        </Launchers>
        <Tasks>
          <Task aria-label="Firefox"><svg width="16" height="16"><circle cx="8" cy="8.500" r="7.500" fill="#f4502c" /><path d="M9 1c5 1 8 5 6 10-1-4-3-5-7-6z" fill="#fcc030" /><circle cx="8" cy="9" r="3.800" fill="#8038c8" /><path d="M2 6c3-1 5 0 6 2-2 0-3 1-3 3z" fill="#fc9020" /></svg></Task>
          <Task aria-label="Explorer"><svg width="16" height="16"><path d="M1 2h6l1 2h7v11H1z" fill="#f4e090" stroke="#c0a450" /><path d="M4 8h10v7h-3v-4H7v4H4z" fill="#68c0e8" /></svg></Task>
          <Task aria-label="VituixCAD" $on><RubyIcon s={16} /></Task>
          <Task aria-label="Image viewer"><svg width="18" height="16"><path d="M2 1h14v14H2z" fill="#b0aca4" /><path d="M7 0l2 4 4-2-1 4 5 1-4 3 3 4-5-2-2 4-2-4-5 2 3-5-4-3 5-1z" fill="#b01420" /></svg></Task>
        </Tasks>
        <Divider />
        <span>EN</span>
        <Divider $tight />
        <Tray>
          <svg width="8" height="10" fill="none" stroke="#000" strokeWidth="1.4"><path d="M1 4l3-3 3 3M1 9l3-3 3 3" /></svg>
          <svg width="16" height="16" fill="none" stroke="#808080"><path d="M1.500 5.500h3l4-4v13l-4-4h-3z" fill="#fff" /><path d="M10.500 5q2 3 0 6M12.500 3q3 5 0 10" /></svg>
          <svg width="17" height="16" fill="#fff" stroke="#808080"><path d="M1.500 12.500h2v2h-2zM4.500 10.500h2v4h-2zM7.500 7.500h2v7h-2zM10.500 4.500h2v10h-2zM13.500 1.500h2v13h-2z" /></svg>
          <svg width="16" height="18"><path d="M2.500 1v16M2.500 2c4-2 6 3 11 0v8c-5 2-7-2-11 0" fill="#fff" stroke="#606060" /><circle cx="11" cy="12.500" r="4.500" fill="#d82020" /><path d="M9 10.500l4 4M13 10.500l-4 4" stroke="#fff" strokeWidth="1.500" /></svg>
          <span>&nbsp;14:14</span>
          <svg width="16" height="16"><path d="M0 1h16v12H0z" fill="#1858b0" /><path d="M1 2h14L3 11H1z" fill="#4898e0" /><path d="M3 14h10v1H3z" fill="#203040" /></svg>
        </Tray>
      </TaskBar>
    </Desktop>
  );
}
